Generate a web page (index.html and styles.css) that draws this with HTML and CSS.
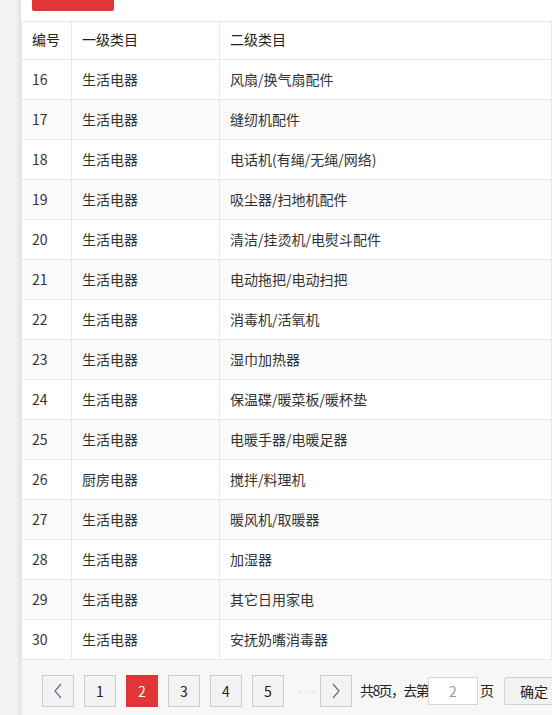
FILE: index.html
```html
<!DOCTYPE html>
<html lang="zh">
<head>
<meta charset="utf-8">
<link rel="stylesheet" href="styles.css">
</head>
<body>
<div class="page">
  <div class="card">
    <div class="toolbar"><button class="btn-danger">+ 添加类目</button></div>
    <table class="grid">
      <colgroup><col class="c1"><col class="c2"><col class="c3"></colgroup>
      <thead><tr><th>编号</th><th>一级类目</th><th>二级类目</th></tr></thead>
      <tbody>
        <tr><td>16</td><td>生活电器</td><td>风扇/换气扇配件</td></tr>
        <tr><td>17</td><td>生活电器</td><td>缝纫机配件</td></tr>
        <tr><td>18</td><td>生活电器</td><td>电话机(有绳/无绳/网络)</td></tr>
        <tr><td>19</td><td>生活电器</td><td>吸尘器/扫地机配件</td></tr>
        <tr><td>20</td><td>生活电器</td><td>清洁/挂烫机/电熨斗配件</td></tr>
        <tr><td>21</td><td>生活电器</td><td>电动拖把/电动扫把</td></tr>
        <tr><td>22</td><td>生活电器</td><td>消毒机/活氧机</td></tr>
        <tr><td>23</td><td>生活电器</td><td>湿巾加热器</td></tr>
        <tr><td>24</td><td>生活电器</td><td>保温碟/暖菜板/暖杯垫</td></tr>
        <tr><td>25</td><td>生活电器</td><td>电暖手器/电暖足器</td></tr>
        <tr><td>26</td><td>厨房电器</td><td>搅拌/料理机</td></tr>
        <tr><td>27</td><td>生活电器</td><td>暖风机/取暖器</td></tr>
        <tr><td>28</td><td>生活电器</td><td>加湿器</td></tr>
        <tr><td>29</td><td>生活电器</td><td>其它日用家电</td></tr>
        <tr><td>30</td><td>生活电器</td><td>安抚奶嘴消毒器</td></tr>
      </tbody>
    </table>
    <div class="pager">
      <a class="pg arrow"><svg width="10" height="16" viewBox="0 0 10 16"><path d="M8 1 L2 8 L8 15" fill="none" stroke="#5f6f8c" stroke-width="1.2"/></svg></a>
      <a class="pg">1</a>
      <a class="pg current">2</a>
      <a class="pg">3</a>
      <a class="pg">4</a>
      <a class="pg">5</a>
      <span class="dots"><i></i><i></i><i></i></span>
      <a class="pg arrow"><svg width="10" height="16" viewBox="0 0 10 16"><path d="M2 1 L8 8 L2 15" fill="none" stroke="#5f6f8c" stroke-width="1.2"/></svg></a>
      <span class="skip">共8页，去第</span>
      <input class="goto" value="2">
      <span class="unit">页</span>
      <button class="ok">确定</button>
    </div>
  </div>
</div>
</body>
</html>
```
FILE: styles.css
```css
html, body {
  margin: 0;
  padding: 0;
  background: #f4f4f4;
  font-family: "Noto Sans CJK SC", "Microsoft YaHei", sans-serif;
  font-size: 14px;
  color: #333;
  overflow: hidden;
}
.page {
  padding-left: 21px;
}
.card {
  background: #fff;
  margin-top: -29px;
  width: 600px;
  box-shadow: -3px 0 4px rgba(0, 0, 0, 0.07);
}
.toolbar {
  height: 50px;
  padding-left: 11px;
}
.btn-danger {
  width: 82px;
  height: 40px;
  border: none;
  border-radius: 2px;
  background: #e23636;
  color: #fff;
  font-family: inherit;
  font-size: 14px;
  padding: 0;
}
.grid {
  border-collapse: collapse;
  width: 531px;
  table-layout: fixed;
}
.c1 { width: 50px; }
.c2 { width: 148px; }
.grid th, .grid td {
  border: 1px solid #e8e8e8;
  text-align: left;
  padding: 0 10px;
  font-weight: normal;
  line-height: 20px;
  white-space: nowrap;
  overflow: hidden;
}
.grid th {
  height: 33px;
  padding-bottom: 4px;
  color: #222;
}
.grid td {
  height: 37px;
  padding-bottom: 2px;
}
.grid tbody tr:nth-child(even) td {
  background: #fafafa;
}
.pager {
  background: #f7f7f7;
  border-left: 1px solid #e8e8e8;
  height: 60px;
  display: flex;
  align-items: flex-start;
  padding-left: 20px;
  padding-top: 15px;
  box-sizing: border-box;
  white-space: nowrap;
}
.pager > * {
  flex-shrink: 0;
}
.pg {
  width: 32px;
  height: 32px;
  box-sizing: border-box;
  border: 1px solid #cdcdcd;
  background: #f3f3f3;
  display: flex;
  align-items: center;
  justify-content: center;
  margin-right: 10px;
  color: #222;
  font-size: 14px;
}
.pg.current {
  background: #e23636;
  border-color: #e23636;
  color: #fff;
}
.dots {
  width: 26px;
  height: 32px;
  display: flex;
  align-items: center;
  justify-content: center;
  gap: 6px;
  padding-right: 2px;
  box-sizing: border-box;
}
.dots i {
  width: 1px;
  height: 1px;
  background: #b5b5b5;
}
.skip, .unit {
  height: 32px;
  line-height: 30px;
  color: #222;
  font-size: 14px;
}
.skip {
  margin-left: -2px;
  width: 68px;
  letter-spacing: -1.6px;
}
.goto {
  width: 50px;
  height: 28px;
  box-sizing: border-box;
  margin: 2px 2px 0 0;
  border: 1px solid #d6d6d6;
  background: #fff;
  text-align: center;
  color: #999;
  font-family: inherit;
  font-size: 14px;
  padding: 0;
}
.ok {
  margin-left: 10px;
  margin-top: 2px;
  width: 60px;
  height: 28px;
  box-sizing: border-box;
  border: 1px solid #d2d2d2;
  background: #f2f2f2;
  font-family: inherit;
  font-size: 14px;
  color: #222;
  padding: 0;
  border-radius: 2px;
}
```
